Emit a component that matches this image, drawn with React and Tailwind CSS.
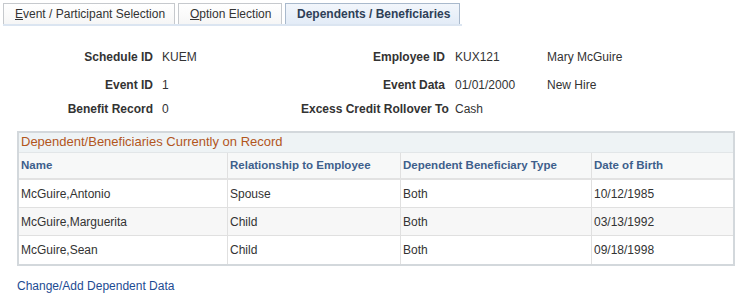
import React from 'react';

const rows = [
  { name: 'McGuire,Antonio', rel: 'Spouse', type: 'Both', dob: '10/12/1985' },
  { name: 'McGuire,Marguerita', rel: 'Child', type: 'Both', dob: '03/13/1992' },
  { name: 'McGuire,Sean', rel: 'Child', type: 'Both', dob: '09/18/1998' },
];

function Tab({ active, children, className = '' }) {
  return (
    <div
      className={`h-[21px] flex items-center border border-b-0 ${active ? 'border-[#a9b9cc] bg-gradient-to-b from-[#f2f6fb] to-[#e3ecf7] font-bold text-[#2e3f57]' : 'border-[#c6c9cd] bg-gradient-to-b from-white to-[#f6f6f6] text-[#333]'} ${className}`}
    >
      {children}
    </div>
  );
}

export default function App() {
  return (
    <div className="w-[740px] h-[298px] bg-white text-[12px] text-[#333] overflow-hidden" style={{ fontFamily: '"Liberation Sans", Arial, sans-serif' }}>
      {/* tabs */}
      <div className="pt-[3px] pl-[3px]">
        <div className="flex gap-[3px] items-end">
          <Tab className="w-[172px] pl-[11px]"><span><u>E</u>vent / Participant Selection</span></Tab>
          <Tab className="w-[104px] pl-[11px]"><span><u>O</u>ption Election</span></Tab>
          <Tab active className="w-[175px] pl-[11px]"><span>Dependents / Beneficiaries</span></Tab>
        </div>
        <div className="w-[459px] h-[2px] bg-[#dbe5f1]" />
      </div>

      {/* header fields */}
      <div className="grid grid-cols-[153px_148px_144px_102px_1fr] mt-[24px] leading-[14px] whitespace-nowrap">
        <div className="text-right font-bold">Schedule ID</div>
        <div className="pl-[9px]">KUEM</div>
        <div className="text-right font-bold">Employee ID</div>
        <div className="pl-[10px]">KUX121</div>
        <div>Mary McGuire</div>

        <div className="text-right font-bold mt-[14px]">Event ID</div>
        <div className="pl-[9px] mt-[14px]">1</div>
        <div className="text-right font-bold mt-[14px]">Event Data</div>
        <div className="pl-[10px] mt-[14px]">01/01/2000</div>
        <div className="mt-[14px]">New Hire</div>

        <div className="text-right font-bold mt-[10px]">Benefit Record</div>
        <div className="pl-[9px] mt-[10px]">0</div>
        <div className="text-right font-bold mt-[10px]">Excess Credit Rollover To</div>
        <div className="pl-[10px] mt-[10px]">Cash</div>
        <div className="mt-[10px]"></div>
      </div>

      {/* grid */}
      <div className="ml-[17px] mt-[15px] w-[718px] border-2 border-[#d3d8dc]">
        <div className="h-[20px] bg-[#eef3f5] text-[#b2561d] text-[13px] leading-[18px] pl-[2px] border-b border-[#e2e6e8]">
          Dependent/Beneficiaries Currently on Record
        </div>
        <div className="grid grid-cols-[209px_173px_191px_1fr] h-[27px] bg-[#f7f8f8] border-b-2 border-[#e2e2e2] font-bold text-[11.5px] text-[#3e5f8c]">
          <div className="flex items-center pl-[2px] border-r border-[#e0e0e0]">Name</div>
          <div className="flex items-center pl-[2px] border-r border-[#e0e0e0]">Relationship to Employee</div>
          <div className="flex items-center pl-[2px] border-r border-[#e0e0e0]">Dependent Beneficiary Type</div>
          <div className="flex items-center pl-[2px]">Date of Birth</div>
        </div>
        {rows.map((r, i) => (
          <div
            key={r.name}
            className={`grid grid-cols-[209px_173px_191px_1fr] h-[28px] ${i % 2 === 1 ? 'bg-[#f7f7f7]' : 'bg-white'} ${i < rows.length - 1 ? 'border-b border-[#e0e0e0]' : ''}`}
          >
            <div className="flex items-center pl-[2px] border-r border-[#e0e0e0]">{r.name}</div>
            <div className="flex items-center pl-[2px] border-r border-[#e0e0e0]">{r.rel}</div>
            <div className="flex items-center pl-[2px] border-r border-[#e0e0e0]">{r.type}</div>
            <div className="flex items-center pl-[2px]">{r.dob}</div>
          </div>
        ))}
      </div>

      <div className="ml-[17px] mt-[11px] text-[#1d4b93]">Change/Add Dependent Data</div>
    </div>
  );
}
